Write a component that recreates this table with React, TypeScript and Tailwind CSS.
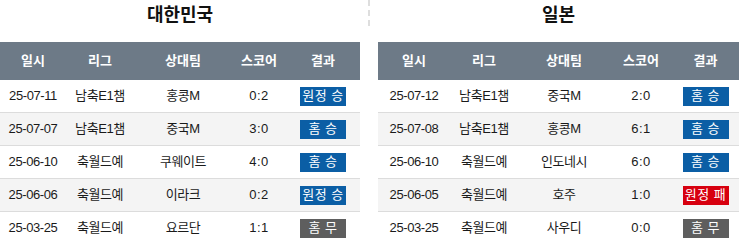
type Match = {
  date: string;
  league: string;
  opp: string;
  score: string;
  result: string;
  tone: "win" | "lose" | "draw";
};

const korea: Match[] = [
  { date: "25-07-11", league: "남축E1챔", opp: "홍콩M", score: "0:2", result: "원정 승", tone: "win" },
  { date: "25-07-07", league: "남축E1챔", opp: "중국M", score: "3:0", result: "홈 승", tone: "win" },
  { date: "25-06-10", league: "축월드예", opp: "쿠웨이트", score: "4:0", result: "홈 승", tone: "win" },
  { date: "25-06-06", league: "축월드예", opp: "이라크", score: "0:2", result: "원정 승", tone: "win" },
  { date: "25-03-25", league: "축월드예", opp: "요르단", score: "1:1", result: "홈 무", tone: "draw" },
];

const japan: Match[] = [
  { date: "25-07-12", league: "남축E1챔", opp: "중국M", score: "2:0", result: "홈 승", tone: "win" },
  { date: "25-07-08", league: "남축E1챔", opp: "홍콩M", score: "6:1", result: "홈 승", tone: "win" },
  { date: "25-06-10", league: "축월드예", opp: "인도네시", score: "6:0", result: "홈 승", tone: "win" },
  { date: "25-06-05", league: "축월드예", opp: "호주", score: "1:0", result: "원정 패", tone: "lose" },
  { date: "25-03-25", league: "축월드예", opp: "사우디", score: "0:0", result: "홈 무", tone: "draw" },
];

const badgeTone = {
  win: "bg-[#0b5ea5]",
  lose: "bg-[#d7000f]",
  draw: "bg-[#5e5e5e]",
};

function Panel({ title, rows, cols, width }: { title: string; rows: Match[]; cols: string; width: string }) {
  return (
    <div className={`${width} shrink-0`}>
      <div className="h-[42px] flex items-start justify-center pt-[3px]">
        <h2 className="text-[18px] font-bold text-[#111] leading-[24px]">{title}</h2>
      </div>
      <div className={`grid ${cols} h-[38px] items-center bg-[#6d7a87] text-white text-[13px] font-bold text-center`}>
        <div>일시</div>
        <div>리그</div>
        <div>상대팀</div>
        <div>스코어</div>
        <div>결과</div>
      </div>
      {rows.map((r, i) => (
        <div
          key={r.date}
          className={`grid ${cols} h-[33px] items-center border-b border-[#dcdcdc] text-center text-[13px] text-[#1a1a1a] ${
            i % 2 === 1 ? "bg-[#f4f4f4]" : "bg-white"
          }`}
        >
          <div className="tracking-[-0.4px]">{r.date}</div>
          <div className="tracking-[-0.4px]">{r.league}</div>
          <div className="tracking-[-0.4px]">{r.opp}</div>
          <div className="tracking-[0.5px]">{r.score}</div>
          <div className="flex justify-center">
            <span
              className={`w-[46px] h-[19px] flex items-center justify-center text-white text-[13px] tracking-[0.5px] ${badgeTone[r.tone]}`}
            >
              {r.result}
            </span>
          </div>
        </div>
      ))}
    </div>
  );
}

export default function App() {
  return (
    <div
      className="relative w-[739px] h-[242px] overflow-hidden bg-white flex"
      style={{ fontFamily: '"Liberation Sans", "Noto Sans CJK KR", sans-serif' }}
    >
      <Panel title="대한민국" rows={korea} cols="grid-cols-[66px_68px_98px_54px_74px]" width="w-[360px]" />
      <div className="w-[18px] shrink-0 flex justify-center">
        <div className="w-[2px] h-[26px] border-l-2 border-dashed border-[#dedede]" />
      </div>
      <Panel title="일본" rows={japan} cols="grid-cols-[72px_68px_92px_62px_67px]" width="w-[361px]" />
    </div>
  );
}
